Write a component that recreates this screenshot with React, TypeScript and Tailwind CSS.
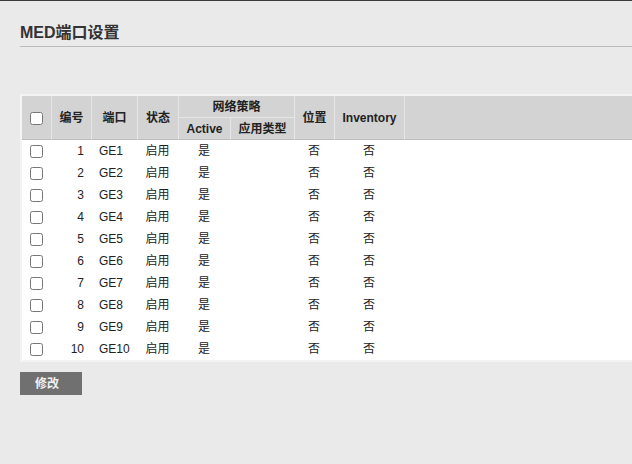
import React from "react";

const rows = Array.from({ length: 10 }, (_, i) => i + 1);

function Cb() {
  return <input type="checkbox" className="m-0 h-[13px] w-[13px] align-middle" />;
}

export default function App() {
  const th = "border-l border-[#e6e6e6] bg-[#d3d3d3] px-0 font-bold text-center align-middle";
  return (
    <div
      className="min-h-[464px] w-full border-t border-[#3a3a3a] bg-[#eaeaea] text-[12px] text-[#222]"
      style={{ fontFamily: '"Liberation Sans", Arial, "Noto Sans CJK SC", sans-serif' }}
    >
      <div className="ml-[20px] pt-[22px]">
        <h1 className="h-[24px] border-b border-[#bcbcbc] text-[16px] font-bold leading-[20px] text-[#333]">
          MED端口设置
        </h1>
      </div>
      <div className="ml-[20px] mt-[47px] bg-[#f3f3f3] pb-[2px] pl-[2px] pt-[2px]">
        <table className="w-full table-fixed border-separate border-spacing-0">
          <colgroup>
            <col className="w-[29px]" />
            <col className="w-[40px]" />
            <col className="w-[46px]" />
            <col className="w-[41px]" />
            <col className="w-[52px]" />
            <col className="w-[64px]" />
            <col className="w-[40px]" />
            <col className="w-[70px]" />
            <col />
          </colgroup>
          <thead>
            <tr className="h-[22px]">
              <th rowSpan={2} className="bg-[#d3d3d3] text-center align-middle border-b border-[#bdbdbd]">
                <Cb />
              </th>
              <th rowSpan={2} className={th + " border-b border-b-[#bdbdbd]"}>编号</th>
              <th rowSpan={2} className={th + " border-b border-b-[#bdbdbd]"}>端口</th>
              <th rowSpan={2} className={th + " border-b border-b-[#bdbdbd]"}>状态</th>
              <th colSpan={2} className={th + " border-b border-b-[#e6e6e6]"}>网络策略</th>
              <th rowSpan={2} className={th + " border-b border-b-[#bdbdbd]"}>位置</th>
              <th rowSpan={2} className={th + " border-b border-b-[#bdbdbd]"}>Inventory</th>
              <th rowSpan={2} className={th + " border-b border-b-[#bdbdbd]"}></th>
            </tr>
            <tr className="h-[22px]">
              <th className={th + " border-b border-b-[#bdbdbd]"}>Active</th>
              <th className={th + " border-b border-b-[#bdbdbd]"}>应用类型</th>
            </tr>
          </thead>
          <tbody className="bg-white">
            {rows.map((n) => (
              <tr key={n} className="h-[22px]">
                <td className="text-center align-middle">
                  <Cb />
                </td>
                <td className="pr-[7px] text-right">{n}</td>
                <td className="pl-[8px] text-left">GE{n}</td>
                <td className="text-center">启用</td>
                <td className="text-center">是</td>
                <td></td>
                <td className="text-center">否</td>
                <td className="text-center">否</td>
                <td></td>
              </tr>
            ))}
          </tbody>
        </table>
      </div>
      <div className="ml-[20px] mt-[10px]">
        <button className="h-[23px] w-[62px] bg-[#707070] pl-[15px] text-left text-[12px] font-bold text-[#f0f0f0]">
          修改
        </button>
      </div>
    </div>
  );
}
